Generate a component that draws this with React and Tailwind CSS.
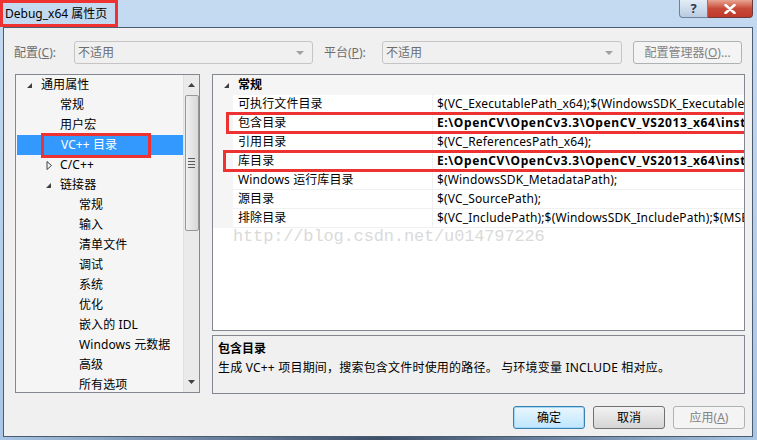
import React from "react";

const font = { fontFamily: '"Noto Sans", "Noto Sans CJK SC", sans-serif' };

const treeItems = [
  { text: "通用属性", level: 0, arrow: "open" },
  { text: "常规", level: 1 },
  { text: "用户宏", level: 1 },
  { text: "VC++ 目录", level: 1, selected: true },
  { text: "C/C++", level: 1, arrow: "closed" },
  { text: "链接器", level: 1, arrow: "open" },
  { text: "常规", level: 2 },
  { text: "输入", level: 2 },
  { text: "清单文件", level: 2 },
  { text: "调试", level: 2 },
  { text: "系统", level: 2 },
  { text: "优化", level: 2 },
  { text: "嵌入的 IDL", level: 2 },
  { text: "Windows 元数据", level: 2 },
  { text: "高级", level: 2 },
  { text: "所有选项", level: 2 },
];

const levelPad = ["pl-[25px]", "pl-[44px]", "pl-[63px]"];

const gridRows = [
  { name: "可执行文件目录", value: "$(VC_ExecutablePath_x64);$(WindowsSDK_ExecutablePath)" },
  { name: "包含目录", value: "E:\\OpenCV\\OpenCv3.3\\OpenCV_VS2013_x64\\install", bold: true },
  { name: "引用目录", value: "$(VC_ReferencesPath_x64);" },
  { name: "库目录", value: "E:\\OpenCV\\OpenCv3.3\\OpenCV_VS2013_x64\\install", bold: true },
  { name: "Windows 运行库目录", value: "$(WindowsSDK_MetadataPath);" },
  { name: "源目录", value: "$(VC_SourcePath);" },
  { name: "排除目录", value: "$(VC_IncludePath);$(WindowsSDK_IncludePath);$(MSBuild)" },
];

// open node: small filled triangle
const OpenArrow = () => (
  <svg width="7" height="7" viewBox="0 0 7 7" className="shrink-0">
    <path d="M6 1 L6 6 L1 6 Z" fill="#404040" />
  </svg>
);

// closed node: outlined triangle
const ClosedArrow = () => (
  <svg width="7" height="9" viewBox="0 0 7 9" className="shrink-0">
    <path d="M1 0.5 L5.5 4.5 L1 8.5 Z" fill="none" stroke="#404040" strokeWidth="1" />
  </svg>
);

const Dropdown = ({ w }) => (
  <div className={`${w} h-[23px] border border-[#c5c5c5] rounded-[3px] bg-[#f0f0f0] flex items-center justify-between pl-[3px] pr-[8px] text-[12px] text-[#6d6d6d]`}>
    <span>不适用</span>
    <svg width="8" height="4" viewBox="0 0 8 4">
      <path d="M0 0 L8 0 L4 4 Z" fill="#a0a0a0" />
    </svg>
  </div>
);

const Tree = () => (
  <div className="relative w-[185px] h-[319px] border border-[#828790] bg-[#f5f5f5] flex overflow-hidden">
    <div className="flex-1 flex flex-col">
      {treeItems.map((it, i) => (
        <div
          key={i}
          className={`relative h-[20px] shrink-0 flex items-center text-[12px] ${levelPad[it.level]} ${it.selected ? "bg-[#3399ff] text-white ml-[1px]" : "text-black"}`}
        >
          {it.arrow && (
            <span className="absolute top-0 bottom-0 flex items-center" style={{ left: 11 + it.level * 19 - (it.arrow === "closed" ? 0 : 1) }}>
              {it.arrow === "open" ? <OpenArrow /> : <ClosedArrow />}
            </span>
          )}
          <span className="whitespace-nowrap tracking-[0.1px]">{it.text}</span>
        </div>
      ))}
    </div>
    {/* scrollbar */}
    <div className="w-[16px] shrink-0 bg-[#eaeaea] border-l border-[#e0e0e0] flex flex-col items-center">
      <div className="h-[20px] flex items-center justify-center">
        <svg width="7" height="4" viewBox="0 0 7 4">
          <path d="M0 4 L3.5 0 L7 4 Z" fill="#404040" />
        </svg>
      </div>
      <div className="w-[14px] h-[136px] rounded-[2px] border border-[#979797] bg-gradient-to-r from-[#f0f0f0] to-[#d8d8d8] flex items-center justify-center">
        <div className="flex flex-col gap-[2px]">
          <div className="w-[7px] h-[1px] bg-[#5a5a5a]" />
          <div className="w-[7px] h-[1px] bg-[#5a5a5a]" />
          <div className="w-[7px] h-[1px] bg-[#5a5a5a]" />
          <div className="w-[7px] h-[1px] bg-[#5a5a5a]" />
        </div>
      </div>
      <div className="flex-1" />
      <div className="h-[20px] flex items-center justify-center">
        <svg width="7" height="4" viewBox="0 0 7 4">
          <path d="M0 0 L7 0 L3.5 4 Z" fill="#404040" />
        </svg>
      </div>
    </div>
    {/* annotation box */}
    <div className="absolute left-[25px] top-[58px] w-[110px] h-[25px] border-[3px] border-[#ee3131]" />
  </div>
);

const Grid = () => (
  <div className="relative w-[533px] h-[257px] border border-[#828790] bg-white overflow-hidden">
    <div className="h-[20px] bg-[#f5f5f5] flex items-center">
      <span className="w-[24px] flex justify-center pl-[2px]">
        <OpenArrow />
      </span>
      <span className="font-bold text-[12px] pl-[1px]">常规</span>
    </div>
    {gridRows.map((r, i) => (
      <div key={i} className="h-[19px] flex text-[12px]">
        <div className="w-[20px] shrink-0 bg-[#f5f5f5]" />
        <div className="w-[200px] shrink-0 border-b border-r border-[#f0f0f0] flex items-center pl-[5px] whitespace-nowrap tracking-[0.1px]">
          {r.name}
        </div>
        <div className={`flex-1 min-w-0 border-b border-[#f0f0f0] flex items-center pl-[4px] whitespace-nowrap overflow-hidden ${r.bold ? "font-bold tracking-[0.6px]" : "tracking-[0.15px]"}`}>
          {r.value}
        </div>
      </div>
    ))}
    {/* watermark */}
    <div
      className="absolute left-[20px] top-[149px] text-[17px] tracking-[-0.15px] text-[#dadada] whitespace-nowrap"
      style={{ fontFamily: '"Liberation Mono", monospace' }}
    >
      http://blog.csdn.net/u014797226
    </div>
    {/* annotation boxes */}
    <div className="absolute left-[13px] top-[37px] w-[521px] h-[22px] border-[3px] border-[#ee3131]" />
    <div className="absolute left-[10px] top-[75px] w-[524px] h-[22px] border-[3px] border-[#ee3131]" />
  </div>
);

export default function App() {
  return (
    <div className="w-[757px] h-[440px] overflow-hidden flex flex-col bg-gradient-to-b from-[#c4daf1] to-[#a9c6e6]" style={font}>
      {/* title bar */}
      <div className="h-[27px] shrink-0 flex items-start">
        <div className="w-[118px] h-[27px] border-[3px] border-[#ee3131] flex items-center pl-[2px] text-[12px] text-black whitespace-nowrap">
          Debug_x64 属性页
        </div>
        <div className="flex-1" />
        <div className="w-[29px] h-[18px] rounded-bl-[4px] border border-t-0 border-[#6f819a] bg-gradient-to-b from-[#e4edf7] to-[#b9cbe0] flex items-center justify-center text-[13px] font-bold text-[#2d3a4e]">
          ?
        </div>
        <div className="w-[45px] h-[18px] mr-[4px] rounded-br-[4px] border border-t-0 border-l-0 border-[#6b3a3a] bg-gradient-to-b from-[#e8a493] via-[#c74a38] to-[#c0392b] flex items-center justify-center">
          <svg width="12" height="10" viewBox="0 0 12 10">
            <path d="M1.5 1 L10.5 9 M10.5 1 L1.5 9" stroke="#ffffff" strokeWidth="2.6" strokeLinecap="round" />
          </svg>
        </div>
      </div>

      {/* window body */}
      <div className="h-[410px] shrink-0 flex">
        <div className="w-[3px] shrink-0" />
        <div className="w-[750px] shrink-0 border border-[#4b5b70] bg-[#f0f0f0] flex flex-col">
          {/* config row */}
          <div className="mt-[13px] h-[23px] flex items-center pl-[10px] text-[12px] text-[#6d6d6d]">
            <span className="w-[60px] shrink-0">
              配置(<span className="underline">C</span>):
            </span>
            <Dropdown w="w-[239px]" />
            <span className="w-[58px] shrink-0 ml-[11px]">
              平台(<span className="underline">P</span>):
            </span>
            <Dropdown w="w-[240px]" />
            <div className="ml-[11px] w-[109px] h-[23px] border border-[#adb2b5] rounded-[3px] bg-[#f4f4f4] flex items-center justify-center text-[#838383]">
              配置管理器(<span className="underline">O</span>)...
            </div>
          </div>

          {/* main */}
          <div className="mt-[10px] flex pl-[11px]">
            <Tree />
            <div className="ml-[12px] flex flex-col">
              <Grid />
              <div className="mt-[4px] w-[533px] h-[59px] border border-[#828790] bg-[#f0f0f0] pl-[5px] pt-[3px] text-[12px] text-black">
                <div className="font-bold h-[19px] flex items-center">包含目录</div>
                <div className="h-[19px] flex items-center whitespace-nowrap tracking-[0.2px]">
                  生成 VC++ 项目期间，搜索包含文件时使用的路径。 与环境变量 INCLUDE 相对应。
                </div>
              </div>
            </div>
          </div>

          {/* buttons */}
          <div className="mt-[12px] flex justify-end gap-[8px] pr-[7px] text-[12px]">
            <div className="w-[72px] h-[23px] rounded-[3px] border border-[#3c7fb1] bg-gradient-to-b from-[#eaf6fd] to-[#bee6fd] shadow-[inset_0_0_0_1px_#9fd9f7] flex items-center justify-center text-black">
              确定
            </div>
            <div className="w-[72px] h-[23px] rounded-[3px] border border-[#707070] bg-gradient-to-b from-[#f2f2f2] to-[#d5d5d5] flex items-center justify-center text-black">
              取消
            </div>
            <div className="w-[72px] h-[23px] rounded-[3px] border border-[#adb2b5] bg-[#f4f4f4] flex items-center justify-center text-[#838383]">
              应用(<span className="underline">A</span>)
            </div>
          </div>
        </div>
        <div className="w-[4px] shrink-0" />
      </div>
      <div className="flex-1 bg-gradient-to-r from-[#a9c6e6] via-[#3e4f68] to-[#a9c6e6]" />
    </div>
  );
}
